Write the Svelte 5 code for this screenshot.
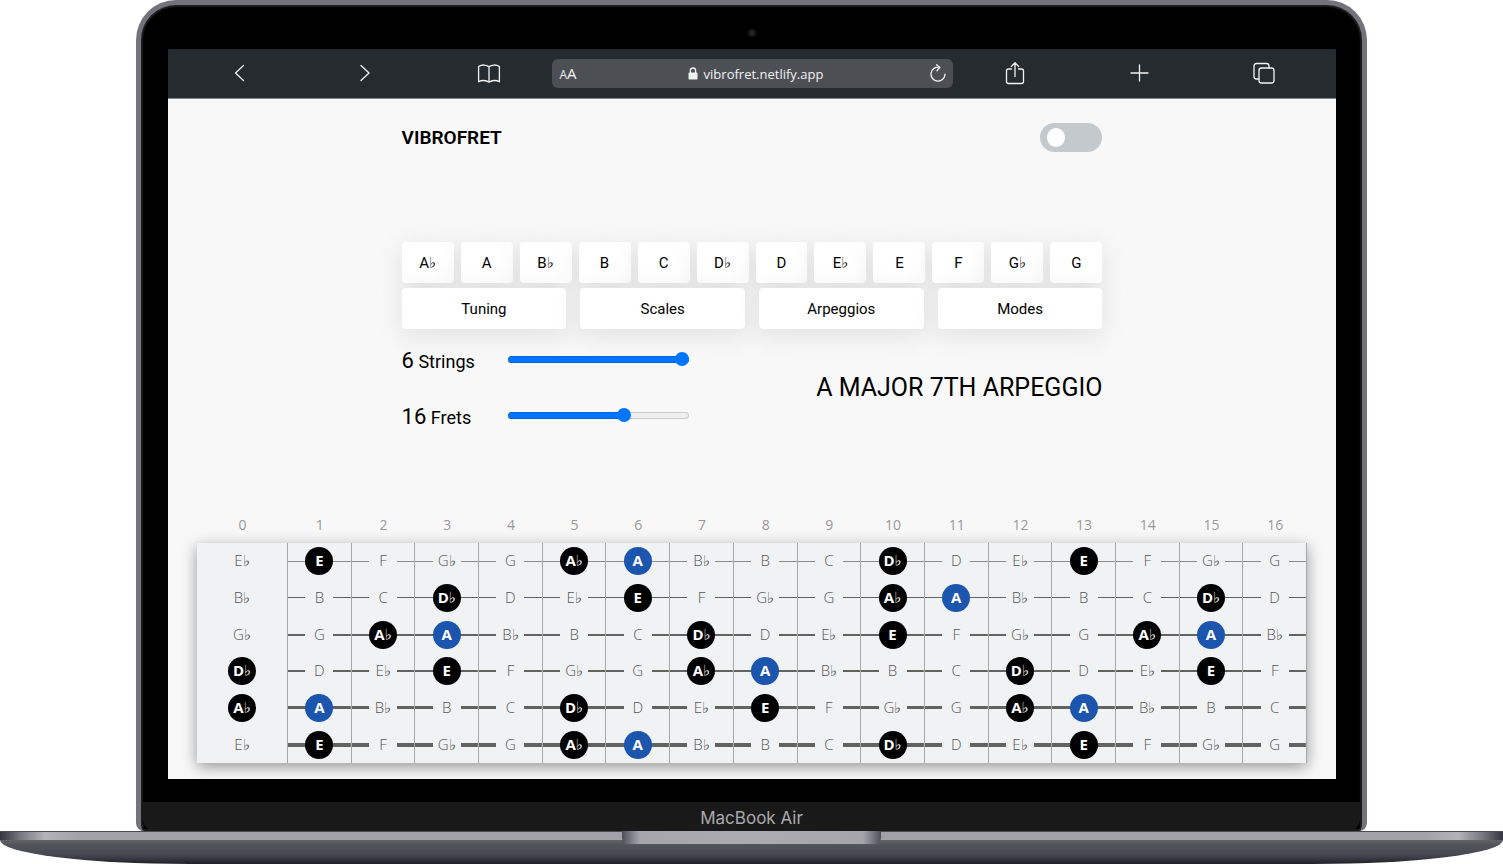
<script>
  const chromatic = ['A♭', 'A', 'B♭', 'B', 'C', 'D♭', 'D', 'E♭', 'E', 'F', 'G♭', 'G'];
  const menus = ['Tuning', 'Scales', 'Arpeggios', 'Modes'];
  const tuning = ['E♭', 'B♭', 'G♭', 'D♭', 'A♭', 'E♭'];
  const chord = ['A', 'D♭', 'E', 'A♭'];
  const gauges = [1, 1, 2, 2, 3, 4];

  let root = $state('A');
  let strings = $state(6);
  let frets = $state(16);
  let dark = $state(false);

  let fretNumbers = $derived(Array.from({ length: Number(frets) + 1 }, (_, i) => i));
  let rows = $derived(
    tuning.slice(0, strings).map((open, s) => ({
      gauge: gauges[s],
      notes: fretNumbers.map((n) => chromatic[(chromatic.indexOf(open) + n) % 12])
    }))
  );
  const fill = (value, max) => ((value - 1) / (max - 1)) * 100;
</script>

<div class="laptop">
  <div class="lid">
    <span class="camera"></span>
    <div class="screen">
      <nav class="browser">
        <button aria-label="Back"><svg width="24" height="24" viewBox="0 0 24 24"><path d="M15.5 4.500 7.500 12l8 7.500" /></svg></button>
        <button aria-label="Forward"><svg width="24" height="24" viewBox="0 0 24 24"><path d="M8 4.500 16 12l-8 7.500" /></svg></button>
        <button aria-label="Bookmarks">
          <svg width="24" height="24" viewBox="0 0 24 24"><path d="M12 5.700C9.500 3.500 4.500 3.500 1.600 5.500v15.300c3-1.900 7.500-1.700 10.400.4 2.900-2.100 7.400-2.300 10.400-.4V5.500C19.500 3.500 14.500 3.500 12 5.700v15.500" /></svg>
        </button>
        <div class="address">
          <button class="textsize" aria-label="Text size"><small>A</small>A</button>
          <span class="url">
            <svg width="10" height="13" viewBox="0 0 10 13"><rect x="0.500" y="5.500" width="9" height="7" rx="1" fill="#f2f2f2" stroke="none" /><path d="M2.400 6V3.600a2.600 2.600 0 0 1 5.200 0V6" /></svg>
            vibrofret.netlify.app
          </span>
          <button aria-label="Reload">
            <svg width="20" height="20" viewBox="0 0 20 20"><path d="M11.500 3.300A7 7 0 1 0 17 10.200M8.600 .8l3.300 2.600-2.900 3.300" /></svg>
          </button>
        </div>
        <button aria-label="Share">
          <svg width="24" height="24" viewBox="0 0 24 24"><path d="M8.500 8H5.500a2 2 0 0 0-2 2v10.500a2 2 0 0 0 2 2h13a2 2 0 0 0 2-2V10a2 2 0 0 0-2-2H15.500M12 15.500V2M8.300 5.500 12 1.800 15.700 5.500" /></svg>
        </button>
        <button aria-label="New tab"><svg width="24" height="24" viewBox="0 0 24 24"><path d="M12.500 4v16M4 12h17" /></svg></button>
        <button aria-label="Tabs">
          <svg width="24" height="24" viewBox="0 0 24 24"><rect x="7" y="7" width="15" height="15" rx="2.500" /><path d="M7 18H4.500A2.500 2.500 0 0 1 2 15.500V5A2.500 2.500 0 0 1 4.500 2.500H14.500A2.500 2.500 0 0 1 17 5v2" /></svg>
        </button>
      </nav>

      <main>
        <header>
          <h1>VIBROFRET</h1>
          <label class="switch">
            <input type="checkbox" bind:checked={dark} aria-label="Dark theme" />
          </label>
        </header>

        <section class="panel">
          <div class="keys">
            {#each chromatic as note}
              <button onclick={() => (root = note)}>{note}</button>
            {/each}
          </div>
          <div class="menus">
            {#each menus as menu}
              <button>{menu}</button>
            {/each}
          </div>
          <div class="settings">
            <div class="sliders">
              <label for="strings"><b>{strings}</b> Strings</label>
              <input id="strings" type="range" min="1" max="6" bind:value={strings} style="--fill: {fill(strings, 6)}%" />
              <label for="frets"><b>{frets}</b> Frets</label>
              <input id="frets" type="range" min="1" max="24" bind:value={frets} style="--fill: {fill(frets, 24)}%" />
            </div>
            <h2>{root} MAJOR 7TH ARPEGGIO</h2>
          </div>
        </section>

        <table style="--frets: {frets}">
          <thead>
            <tr>
              {#each fretNumbers as n}
                <th scope="col">{n}</th>
              {/each}
            </tr>
          </thead>
          <tbody>
            {#each rows as row}
              <tr style="--gauge: {row.gauge}px">
                {#each row.notes as note}
                  <td><span class:on={chord.includes(note)} class:root={note === root}>{note}</span></td>
                {/each}
              </tr>
            {/each}
          </tbody>
        </table>
      </main>
    </div>
    <div class="chin">MacBook Air</div>
  </div>
  <div class="base"><div class="notch"></div></div>
</div>

<style>
  :global(body) {
    background: #fff;
  }
  .laptop {
    font-family: Roboto, "DejaVu Sans", sans-serif;
    color: #000;
  }
  button {
    border: 0;
    padding: 0;
    background: none;
    color: inherit;
    font: inherit;
    cursor: pointer;
  }
  .lid {
    position: relative;
    box-sizing: border-box;
    margin: 0 136px;
    padding: 44px 26px 0 27px;
    background: #000;
    border: 5px solid #74737b;
    border-bottom: 0;
    border-radius: 40px 40px 8px 8px;
    box-shadow: inset 0 0 1px 2px #1c1c1e, inset 0 0 0 1px #303034;
  }
  .camera {
    position: absolute;
    top: 24px;
    left: 50%;
    width: 4px;
    height: 4px;
    margin-left: -4px;
    border: 2px solid #17171a;
    border-radius: 50%;
    background: #26262c;
  }
  .screen {
    background: #f8f8f8;
    overflow: hidden;
  }
  .browser {
    display: grid;
    grid-template-columns: repeat(3, 1fr) 401px repeat(3, 1fr);
    align-items: center;
    height: 49px;
    padding: 0 10px;
    background: #262b2f;
    border-bottom: 1px solid #85868a;
    color: #f2f2f2;
  }
  .browser > button {
    display: grid;
    place-items: center;
    height: 48px;
    align-self: start;
  }
  .browser svg {
    display: block;
    fill: none;
    stroke: #f2f2f2;
    stroke-width: 1.3;
    stroke-linecap: round;
    stroke-linejoin: round;
  }
  .address {
    display: grid;
    grid-template-columns: 24px 1fr 20px;
    align-items: center;
    height: 29px;
    padding: 0 5px 0 8px;
    border-radius: 6px;
    background: #4c4f54;
    font: 13px/26px "Open Sans", sans-serif;
    font-weight: 500;
  }
  .textsize {
    font-size: 15px;
    text-align: left;
    white-space: nowrap;
  }
  .textsize small {
    font-size: 12px;
  }
  .url {
    display: flex;
    justify-content: center;
    align-items: center;
    gap: 6px;
  }
  main {
    padding-bottom: 16px;
  }
  header {
    display: flex;
    justify-content: space-between;
    align-items: center;
    margin: 0 20%;
    padding-top: 24px;
  }
  h1 {
    margin: 0;
    font-size: 19px;
    font-weight: 600;
  }
  .switch {
    display: block;
    height: 29px;
  }
  .switch input {
    appearance: none;
    display: flex;
    align-items: center;
    box-sizing: border-box;
    width: 62px;
    height: 29px;
    margin: 0;
    padding: 0 7px;
    border-radius: 15px;
    background: #c4c9cd;
  }
  .switch input::before {
    content: "";
    width: 18px;
    height: 19px;
    border-radius: 50%;
    background: #fff;
  }
  .switch input:checked {
    justify-content: flex-end;
  }
  .panel {
    margin: 90px 20% 0;
    font-size: 15px;
  }
  .keys {
    display: grid;
    grid-template-columns: repeat(12, 1fr);
    gap: 7px;
  }
  .menus {
    display: grid;
    grid-template-columns: repeat(4, 1fr);
    gap: 14px;
    margin-top: 5px;
  }
  .keys button,
  .menus button {
    height: 41px;
    border-radius: 4px;
    background: #fff;
    box-shadow: 0 6px 28px rgba(0, 0, 0, 0.1);
  }
  .settings {
    display: flex;
    justify-content: space-between;
    align-items: center;
    margin-top: 2px;
  }
  .sliders {
    display: grid;
    grid-template-columns: 92px 181px;
    column-gap: 14px;
    grid-auto-rows: 56px;
    align-items: center;
    font-size: 18px;
  }
  .sliders label {
    padding-top: 2px;
  }
  .sliders b {
    font-size: 22px;
    font-weight: 400;
  }
  .sliders input {
    appearance: none;
    width: 100%;
    height: 14px;
    margin: 0;
    background: none;
  }
  .sliders input::-webkit-slider-runnable-track {
    height: 7px;
    border-radius: 4px;
    background: linear-gradient(90deg, #0075ff var(--fill), #efefef var(--fill));
    box-shadow: inset 0 0 0 1px rgba(0, 0, 0, 0.15);
  }
  .sliders input::-webkit-slider-thumb {
    appearance: none;
    width: 14px;
    height: 14px;
    margin-top: -4px;
    border-radius: 50%;
    background: #0075ff;
  }
  h2 {
    margin: 0;
    font-size: 25px;
    font-weight: 400;
  }
  table {
    display: block;
    margin: 73px 29px 0;
    font-family: "Open Sans", "DejaVu Sans", sans-serif;
    font-size: 15px;
  }
  thead,
  tbody {
    display: grid;
  }
  tr {
    display: grid;
    grid-template-columns: 91px repeat(var(--frets), minmax(0, 1fr));
  }
  th {
    padding: 0;
    font-size: 14px;
    font-weight: 400;
    line-height: 18px;
    color: #999;
  }
  tbody {
    grid-auto-rows: 1fr;
    height: 220px;
    margin-top: 9px;
    background: #f0f2f4;
    box-shadow: 0 4px 14px rgba(0, 0, 0, 0.4);
  }
  td {
    display: grid;
    place-items: center;
    padding: 0;
    border-right: 1px solid #a8a8a8;
    background: linear-gradient(#616361, #616361) center / 100% var(--gauge) no-repeat;
  }
  tr:first-child td {
    background-image: linear-gradient(#8a8b8a, #8a8b8a);
  }
  tr td:first-child {
    background: none;
  }
  td span {
    width: 28px;
    height: 28px;
    background: #f0f2f4;
    color: #555;
    font-weight: 300;
    line-height: 26px;
    text-align: center;
  }
  td .on {
    border-radius: 50%;
    background: #000;
    color: #fff;
    font-weight: 700;
  }
  td .root {
    background: #1c55ad;
  }
  .chin {
    height: 29px;
    margin: 23px -24px 0 -25px;
    border-radius: 0 0 12px 12px;
    background: #191919;
    color: #a9a9ad;
    font: 17px/32px Inter, sans-serif;
    text-align: center;
  }
  .base {
    height: 33px;
    border-radius: 0 0 190px 190px / 0 0 24px 24px;
    background:
      linear-gradient(#4c4c51, #4c4c51) 0 0 / 100% 1px no-repeat,
      linear-gradient(90deg, #33343d, #77777e 20px, #b4b3b9 45px, #a2a1a8 80px, #a2a1a8 calc(100% - 80px), #b4b3b9 calc(100% - 45px), #77777e calc(100% - 20px), #33343d) 0 1px / 100% 8px no-repeat,
      linear-gradient(#626367, #53545b 5px, #464751 15px, #1f2029) 0 9px / 100% 24px no-repeat;
  }
  .notch {
    width: 259px;
    height: 13px;
    margin: 0 auto;
    border-radius: 0 0 6px 6px;
    background: linear-gradient(90deg, #4e4e57, #77777f 8px, #a6a5ab 18px, #acabb1 50%, #a6a5ab calc(100% - 18px), #77777f calc(100% - 8px), #4e4e57);
  }
</style>
